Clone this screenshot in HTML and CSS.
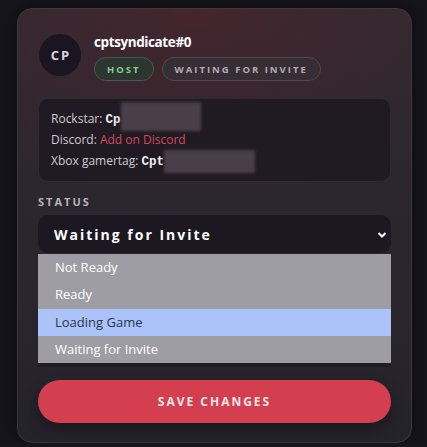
FILE: index.html
```html
<!DOCTYPE html>
<html lang="en">
<head>
    <meta charset="UTF-8">
    <meta name="viewport" content="width=device-width, initial-scale=1.0">
    <title>Player Card</title>
    <link rel="stylesheet" href="styles.css">
</head>
<body>
    <div class="card">
        <div class="player-head">
            <div class="avatar">CP</div>
            <div class="player-meta">
                <div class="player-name">cptsyndicate#0</div>
                <div class="badges">
                    <span class="badge badge-host">HOST</span>
                    <span class="badge badge-status">WAITING FOR INVITE</span>
                </div>
            </div>
        </div>

        <div class="contact-box">
            <div class="contact-line">Rockstar: <span class="handle">Cp</span><span class="redacted redacted-rockstar"></span></div>
            <div class="contact-line">Discord: <a href="#" class="discord-link">Add on Discord</a></div>
            <div class="contact-line">Xbox gamertag: <span class="handle">Cpt</span><span class="redacted redacted-xbox"></span></div>
        </div>

        <label class="field-label" for="status-select">STATUS</label>
        <div class="select-wrap">
            <div class="select-box" id="status-select">
                <span>Waiting for Invite</span>
                <svg class="chevron" width="10" height="8" viewBox="0 0 10 8">
                    <path d="M1.5 2 L5 5.5 L8.5 2" fill="none" stroke="#fff" stroke-width="2"/>
                </svg>
            </div>
            <ul class="options">
                <li>Not Ready</li>
                <li>Ready</li>
                <li class="hovered">Loading Game</li>
                <li>Waiting for Invite</li>
            </ul>
        </div>

        <button class="save-btn">SAVE CHANGES</button>
    </div>
</body>
</html>
```

FILE: styles.css
```css
body {
    margin: 0;
    background: #16151b;
    font-family: "Open Sans", "Noto Sans", sans-serif;
    color: #e8e4e8;
}
.card {
    margin: 8px 0 0 17px;
    width: 353px;
    padding: 24px 20px 19px 20px;
    border: 1px solid #3d3840;
    border-radius: 15px;
    background:
        radial-gradient(ellipse 70% 45% at 45% 0%, rgba(90, 32, 42, 0.45), rgba(90, 32, 42, 0) 100%),
        linear-gradient(180deg, #322a31 0%, #2a262d 50%, #25232a 100%);
    box-shadow: 0 0 18px rgba(0, 0, 0, 0.5);
}
.player-head {
    display: flex;
    gap: 13px;
    padding-left: 1px;
}
.avatar {
    width: 42px;
    height: 42px;
    margin-top: 1px;
    border-radius: 50%;
    background: #1a1520;
    color: #d8d4dc;
    font-weight: 700;
    font-size: 13px;
    letter-spacing: 2px;
    display: flex;
    align-items: center;
    justify-content: center;
    padding-left: 2px;
    box-sizing: border-box;
}
.player-name {
    font-weight: 700;
    font-size: 13.5px;
    letter-spacing: -0.4px;
    color: #fff;
    line-height: 18px;
    margin-bottom: 6px;
}
.badges {
    display: flex;
    gap: 8px;
}
.badge {
    height: 24px;
    padding: 0 12px;
    border-radius: 12px;
    font-size: 9.5px;
    font-weight: 700;
    letter-spacing: 2px;
    display: flex;
    align-items: center;
    box-sizing: border-box;
}
.badge-host {
    background: #2c3530;
    border: 1px solid #43594a;
    color: #84cf90;
}
.badge-status {
    background: #372e35;
    border: 1px solid #53474f;
    color: #b4abb1;
}
.contact-box {
    margin-top: 17px;
    padding: 9px 12px 10px;
    background: #201b23;
    border: 1px solid #2f2a32;
    border-radius: 10px;
    font-size: 12px;
    color: #cfc9d0;
}
.contact-line {
    line-height: 21px;
    height: 21px;
    white-space: pre;
}
.handle {
    font-family: "Liberation Mono", monospace;
    font-weight: 700;
    font-size: 12.5px;
    color: #f2eef2;
}
.redacted {
    display: inline-block;
    vertical-align: top;
    background: #4a3e49;
    filter: blur(1.5px);
}
.redacted-rockstar {
    width: 80px;
    height: 29px;
    margin: -6px 0 -2px;
}
.redacted-xbox {
    width: 91px;
    height: 23px;
    margin: 0 0 -2px;
}
.discord-link {
    color: #d4485a;
    text-decoration: none;
}
.field-label {
    display: block;
    margin-top: 12px;
    font-size: 11px;
    font-weight: 700;
    letter-spacing: 2px;
    color: #b9b3bb;
    line-height: 16px;
}
.select-wrap {
    position: relative;
    margin-top: 5px;
}
.select-box {
    height: 38px;
    padding: 0 4px 0 16px;
    background: #1b1822;
    border-radius: 10px;
    display: flex;
    align-items: center;
    justify-content: space-between;
    font-weight: 700;
    font-size: 14px;
    letter-spacing: 2px;
    color: #fff;
}
.chevron {
    margin-top: 1px;
}
.options {
    position: absolute;
    top: 39px;
    left: 0;
    right: 0;
    margin: 0;
    padding: 0;
    list-style: none;
    background: #9e9da3;
    box-shadow: 0 4px 0 #1f1d25;
    font-size: 13px;
    color: #fff;
}
.options li {
    height: 27.3px;
    line-height: 27px;
    padding-left: 17px;
}
.options li.hovered {
    background: #abc3f8;
    color: #2b3550;
}
.save-btn {
    display: block;
    width: 100%;
    height: 43px;
    margin-top: 127px;
    border: none;
    border-radius: 22px;
    background: #d33f4e;
    color: #f8e6e8;
    font-family: inherit;
    font-size: 12px;
    font-weight: 700;
    letter-spacing: 2px;
    box-shadow: 0 6px 14px rgba(0, 0, 0, 0.35);
}
```
